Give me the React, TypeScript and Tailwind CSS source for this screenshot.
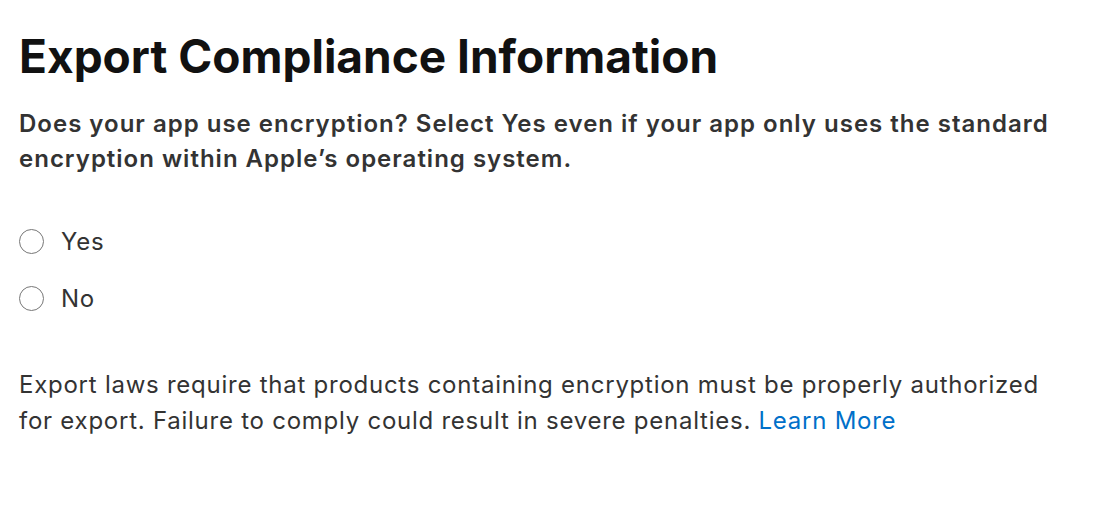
import { useState } from "react";

const font = { fontFamily: 'Inter, "Noto Sans", sans-serif' };

export default function App() {
    const [choice, setChoice] = useState<string | null>(null);

    return (
        <div style={font} className="w-[1094px] h-[526px] bg-white px-[19px] pt-[28px] text-[#333]">
            <h1 className="text-[46px] leading-[56px] font-bold tracking-[0px] text-[#111]">
                Export Compliance Information
            </h1>

            <p className="mt-[22px] text-[24px] leading-[35px] font-semibold tracking-[1px] text-[#333]">
                Does your app use encryption? Select Yes even if your app only uses the standard
                <br />
                encryption within Apple’s operating system.
            </p>

            <div className="mt-[53px] flex flex-col gap-[32px]">
                {["Yes", "No"].map((opt) => (
                    <label key={opt} className="flex items-center gap-[17px] cursor-pointer">
                        <span
                            onClick={() => setChoice(opt)}
                            className="w-[25px] h-[25px] rounded-full border-[1.5px] border-[#777] flex items-center justify-center"
                        >
                            {choice === opt && <span className="w-[11px] h-[11px] rounded-full bg-[#0070c9]" />}
                        </span>
                        <span className="text-[24px] leading-[24px] tracking-[0.75px] text-[#333]">{opt}</span>
                    </label>
                ))}
            </div>

            <p className="mt-[56px] text-[24px] leading-[36px] tracking-[0.75px] text-[#333]">
                Export laws require that products containing encryption must be properly authorized
                <br />
                for export. Failure to comply could result in severe penalties.{" "}
                <a href="#" className="text-[#0070c9]">Learn More</a>
            </p>
        </div>
    );
}
